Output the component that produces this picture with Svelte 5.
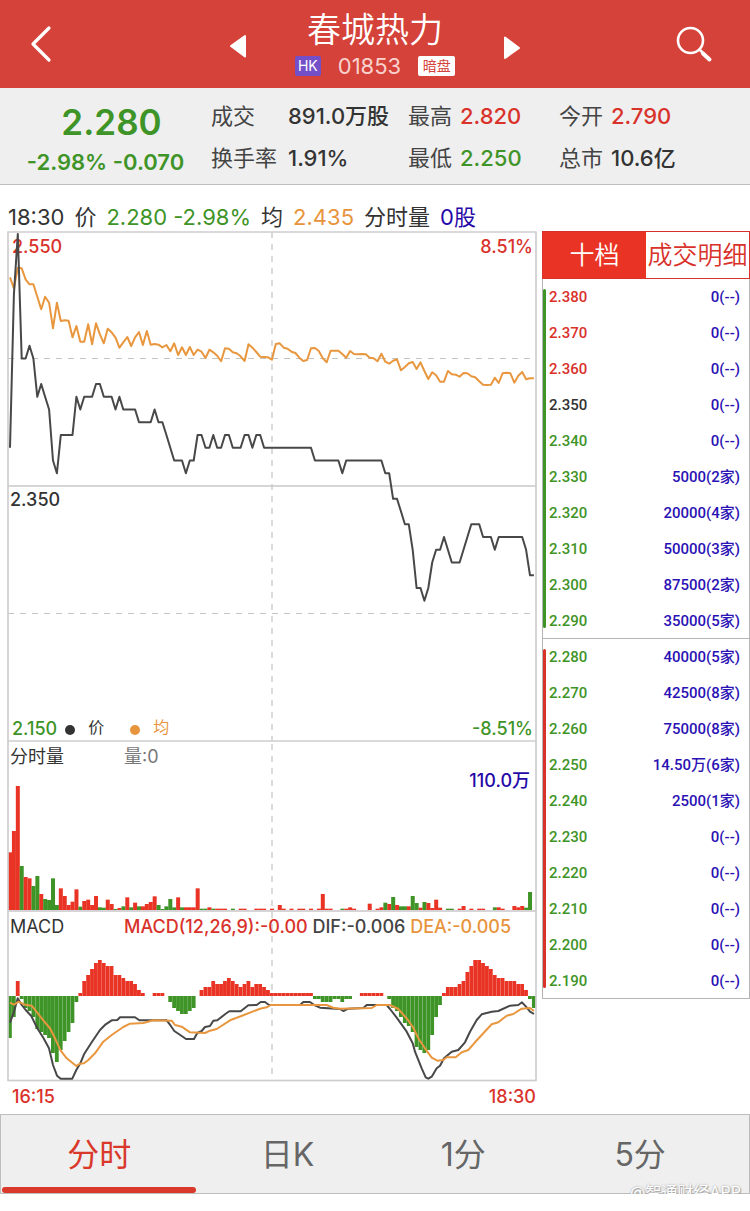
<script>
  const STEP = 3.91;
  const LEFT = 1;

  // Last traded price per minute, in ticks of 0.010 from the previous close of 2.350.
  const priceTicks = [
    3, 15, 20, 10, 10, 11, 10, 7, 8, 7, 6, 2, 1, 4, 4, 4, 4, 7, 6, 7, 7, 7, 8, 8, 7, 7, 7, 6, 7, 6,
    6, 6, 6, 5, 5, 5, 5, 6, 5, 5, 4, 3, 2, 2, 2, 1, 2, 2, 4, 4, 3, 3, 4, 3, 3, 4, 4, 3, 3, 3,
    4, 4, 3, 4, 4, 3, 3, 3, 3, 3, 3, 3, 3, 3, 3, 3, 3, 3, 2, 2, 2, 2, 2, 2, 2, 1, 2, 2, 2, 2,
    2, 2, 2, 2, 2, 2, 1, 1, -1, -1, -2, -3, -3, -5, -8, -8, -9, -8, -6, -5, -5, -4, -5, -6, -6, -6,
    -5, -4, -3, -3, -3, -4, -4, -4, -5, -4, -4, -4, -4, -4, -4, -4, -5, -7, -7
  ];

  // Average line per minute, in thirds of a chart unit.
  const average = [
    157, 190, 128, 130, 163, 178, 178, 215, 253, 215, 233, 310, 233, 288, 286, 287, 337, 303, 350, 350,
    298, 358, 295, 328, 355, 311, 322, 338, 368, 352, 336, 363, 337, 321, 360, 318, 359, 357, 359, 367,
    360, 379, 355, 390, 367, 390, 366, 390, 374, 380, 399, 374, 382, 392, 409, 370, 371, 382, 385, 394,
    408, 358, 368, 381, 395, 396, 397, 404, 357, 355, 368, 371, 380, 384, 398, 408, 405, 370, 369, 378,
    400, 412, 377, 377, 377, 387, 398, 378, 387, 388, 387, 388, 398, 400, 409, 386, 410, 416, 407, 403,
    436, 426, 415, 411, 432, 412, 438, 462, 442, 451, 470, 470, 438, 448, 449, 455, 444, 445, 454, 457,
    469, 479, 480, 479, 458, 474, 445, 443, 445, 473, 452, 441, 463, 460, 460
  ];

  // Volume per minute: positive is a rising minute, negative a falling one.
  const volume = [
    173, 237, 372, -132, 99, 95, -72, -102, 48, -33, -30, -95, -15, 65, 42, 15, 25, 62, -10, 27,
    31, 15, 42, -8, -7, 31, 18, -3, 6, -11, 38, -8, 22, -11, 11, 18, 24, 41, -15, -3,
    -11, -33, -8, 38, -8, 8, 8, 8, 65, -4, -4, 8, -4, 4, 4, 4, 0, -4, 0, 4,
    4, 0, 0, 4, 4, 4, 0, 4, 0, 15, 4, 0, 4, 0, 4, 4, 0, 4, 0, 4,
    48, 4, 4, 0, 0, -4, 4, 8, 4, 0, 0, 0, 19, 0, 4, 8, -22, 18, -39, 15,
    -11, -11, 11, -42, -21, 7, -24, 21, 6, 31, 7, 0, -4, -4, 0, 4, 12, 0, 4, 0,
    4, 4, 0, 0, -8, 8, 4, 0, 0, 12, 8, 12, -7, -54, 0
  ];

  // MACD histogram per minute.
  const macd = [
    -14, -7, 5, -1, -4, -5, -7, -11, -12, -13, -14, -19, -22, -18, -15, -12, -9, -2, 1, 5,
    7, 9, 11, 12, 11, 10, 10, 7, 7, 6, 5, 5, 4, 2, 1, 0, 0, 1, 1, 1,
    0, -2, -4, -5, -6, -6, -5, -4, 0, 2, 3, 3, 5, 4, 4, 5, 6, 5, 4, 3,
    4, 5, 3, 4, 4, 3, 2, 1, 1, 1, 1, 1, 1, 1, 1, 1, 1, 1, -1, -1,
    -2, -2, -2, -1, -1, -2, -1, -1, 0, 0, 1, 1, 1, 1, 1, 1, 0, -1, -4, -5,
    -7, -9, -10, -12, -17, -18, -19, -18, -13, -7, -3, 1, 3, 3, 3, 4, 5, 8, 10, 12,
    12, 11, 10, 9, 7, 6, 6, 5, 5, 5, 4, 4, 2, -1, -4
  ];

  const dif = [
    [30, 353], [42, 320], [53, 280], [65, 300], [77, 315], [94, 333], [112, 370], [130, 398], [147, 430],
    [159, 480], [171, 512], [182, 521], [217, 521], [229, 495], [241, 475], [252, 448], [275, 412],
    [300, 375], [317, 358], [335, 346], [352, 345], [360, 337], [405, 337], [418, 346], [500, 346],
    [512, 362], [523, 378], [545, 393], [558, 402], [582, 402], [592, 384], [605, 378], [615, 366],
    [630, 363], [640, 347], [652, 346], [675, 328], [688, 319], [722, 319], [745, 301], [770, 300],
    [782, 291], [795, 291], [807, 300], [900, 300], [910, 291], [930, 291], [943, 300], [960, 308],
    [1020, 312], [1030, 318], [1045, 311], [1090, 309], [1100, 300], [1160, 300], [1170, 312], [1190, 338],
    [1220, 380], [1238, 415], [1245, 440], [1265, 490], [1277, 517], [1285, 521], [1295, 515], [1310, 490],
    [1320, 482], [1332, 460], [1355, 440], [1375, 435], [1395, 412], [1410, 380], [1430, 345], [1445, 328],
    [1475, 320], [1495, 318], [1530, 302], [1555, 300], [1566, 292], [1578, 305], [1590, 320], [1602, 327]
  ];

  const dea = [
    [30, 293], [42, 299], [55, 290], [75, 299], [95, 302], [125, 340], [150, 370], [165, 400], [182, 437],
    [200, 460], [229, 483], [240, 476], [252, 475], [265, 465], [285, 445], [310, 410], [335, 390],
    [370, 366], [390, 356], [430, 354], [460, 346], [515, 347], [525, 360], [545, 365], [570, 382],
    [615, 384], [630, 377], [650, 372], [690, 346], [730, 331], [780, 311], [800, 307], [812, 300],
    [980, 300], [1000, 308], [1020, 311], [1115, 309], [1130, 300], [1170, 300], [1195, 312], [1220, 340],
    [1240, 368], [1255, 400], [1275, 430], [1295, 458], [1312, 467], [1330, 465], [1340, 457], [1367, 457],
    [1385, 442], [1405, 435], [1425, 412], [1450, 385], [1475, 358], [1495, 352], [1520, 332], [1540, 327],
    [1565, 311], [1590, 309], [1602, 318]
  ];

  const mid = (i) => LEFT + STEP * (i + 0.5);
  const join = (pts) => pts.map(([x, y]) => `${x.toFixed(1)},${y.toFixed(1)}`).join(' ');
  const priceLine = join(priceTicks.map((t, i) => [mid(i), Math.max(3, 255 - t * 12.75)]));
  const averageLine = join(average.map((v, i) => [mid(i), v / 3 - 6]));
  const toMacd = (pts) => join(pts.map(([x, y]) => [x / 3 - 7, y / 3 - 6]));

  const asks = [
    ['2.380', '0(--)', 'up'], ['2.370', '0(--)', 'up'], ['2.360', '0(--)', 'up'],
    ['2.350', '0(--)', 'flat'], ['2.340', '0(--)', 'down'], ['2.330', '5000(2家)', 'down'],
    ['2.320', '20000(4家)', 'down'], ['2.310', '50000(3家)', 'down'],
    ['2.300', '87500(2家)', 'down'], ['2.290', '35000(5家)', 'down']
  ];
  const bids = [
    ['2.280', '40000(5家)', 'down'], ['2.270', '42500(8家)', 'down'], ['2.260', '75000(8家)', 'down'],
    ['2.250', '14.50万(6家)', 'down'], ['2.240', '2500(1家)', 'down'], ['2.230', '0(--)', 'down'],
    ['2.220', '0(--)', 'down'], ['2.210', '0(--)', 'down'], ['2.200', '0(--)', 'down'],
    ['2.190', '0(--)', 'down']
  ];

  const stats = [
    ['成交', '891.0万股', 'flat'], ['最高', '2.820', 'up'], ['今开', '2.790', 'up'],
    ['换手率', '1.91%', 'flat'], ['最低', '2.250', 'down'], ['总市', '10.6亿', 'flat']
  ];

  const periods = ['分时', '日K', '1分', '5分'];
  let period = $state('分时');
  let side = $state('十档');
</script>

<header class="topbar">
  <button class="back" aria-label="返回">
    <svg width="22" height="38" viewBox="0 0 22 38"><path d="M19 3 3 19l16 16" fill="none" stroke="#fff" stroke-width="3.2" stroke-linecap="round" stroke-linejoin="round" /></svg>
  </button>
  <div class="switcher">
    <button aria-label="上一只">
      <svg width="18" height="28" viewBox="0 0 18 28"><path d="M16 5v20.500L2 15Z" fill="#fff" stroke="#fff" stroke-width="2" stroke-linejoin="round" /></svg>
    </button>
    <div class="title">
      <h1>春城热力</h1>
      <div class="code"><span class="tag hk">HK</span><span>01853</span><span class="tag dark">暗盘</span></div>
    </div>
    <button aria-label="下一只">
      <svg width="18" height="28" viewBox="0 0 18 28"><path d="M2 6.500v20.500L16 17Z" fill="#fff" stroke="#fff" stroke-width="2" stroke-linejoin="round" /></svg>
    </button>
  </div>
  <button class="search" aria-label="搜索">
    <svg width="38" height="38" viewBox="0 0 38 38"><circle cx="15.500" cy="15.500" r="12.500" fill="none" stroke="#fff" stroke-width="2.600" /><path d="m24.500 24.500 4 4" stroke="#fff" stroke-width="2.600" /><path d="m28 28.500 6.500 6" stroke="#fff" stroke-width="4" stroke-linecap="round" /></svg>
  </button>
</header>

<section class="summary">
  <div class="quote down">
    <strong>2.280</strong>
    <span>-2.98% -0.070</span>
  </div>
  <dl>
    {#each stats as [name, value, tone]}
      <dt>{name}</dt>
      <dd class={tone}>{value}</dd>
    {/each}
  </dl>
</section>

<main>
  <p class="ticker">
    <span>18:30</span><span>价</span><span class="down">2.280 -2.98%</span><span>均</span><span class="avg">2.435</span><span>分时量</span><span class="vol">0股</span>
  </p>

  <div class="board">
    <div class="charts">
      <div class="panel">
        <svg viewBox="0 0 530 510" role="img" aria-label="分时价格">
          <path class="dash" d="M265 1v509M1 127.500h528M1 382.500h528" />
          <path class="rule" d="M1 255h528" />
          <path class="frame" d="M1 510V1h528v509" />
          <text class="edge up" x="5" y="22">2.550</text>
          <polyline class="line orange" points={averageLine} />
          <polyline class="line ink" points={priceLine} />
        </svg>
        <span class="label figure tr up">8.51%</span>
        <span class="label figure middle">2.350</span>
        <div class="label legend">
          <span class="figure down">2.150</span><i></i><span class="name">价</span><i class="orange"></i><span class="name avg">均</span>
        </div>
        <span class="label figure br down">-8.51%</span>
      </div>

      <div class="panel">
        <svg viewBox="0 0 530 170" role="img" aria-label="分时量">
          <path class="dash" d="M265 3v166" />
          {#each volume as v, i}
            {#if v}
              <rect class={v > 0 ? 'rise' : 'fall'} x={LEFT + i * STEP} y={169 - Math.abs(v) / 3} width="4" height={Math.abs(v) / 3} />
            {/if}
          {/each}
          <path class="frame" d="M1 170V0M529 170V0M0 0h530" />
        </svg>
        <div class="label heads"><span>分时量</span><span class="muted">量:0</span></div>
        <span class="label figure peak vol">110.0万</span>
      </div>

      <div class="panel">
        <svg viewBox="0 0 530 170" role="img" aria-label="MACD">
          <path class="dash" d="M265 1v168" />
          {#each macd as v, i}
            {#if v}
              <rect class={v > 0 ? 'rise' : 'fall'} x={LEFT + i * STEP} y={v > 0 ? 85 - v * 3 : 85} width="3.800" height={Math.abs(v) * 3} />
            {/if}
          {/each}
          <rect class="frame" x="1" y="0" width="528" height="169.500" />
          <polyline class="line ink" points={toMacd(dif)} />
          <polyline class="line orange" points={toMacd(dea)} />
        </svg>
        <div class="label heads"><span>MACD</span><span class="figure up">MACD(12,26,9):-0.00 <b>DIF:-0.006</b> <b class="avg">DEA:-0.005</b></span></div>
      </div>

      <div class="times figure up"><span>16:15</span><span>18:30</span></div>
    </div>

    <aside>
      <div class="sides">
        {#each ['十档', '成交明细'] as name}
          <button class:active={side === name} onclick={() => (side = name)}>{name}</button>
        {/each}
      </div>
      {#each [asks, bids] as rows, n}
        <div class="book" class:bids={n === 1}>
          <table>
            <tbody>
              {#each rows as [price, size, tone]}
                <tr><th scope="row" class={tone}>{price}</th><td>{size}</td></tr>
              {/each}
            </tbody>
          </table>
        </div>
      {/each}
    </aside>
  </div>
</main>

<nav>
  {#each periods as name}
    <button class:active={period === name} onclick={() => (period = name)}>{name}</button>
  {/each}
  <span class="watermark">@智通财经APP</span>
</nav>

<style>
  :global(body) {
    margin: 0;
    background: #fff;
    color: #333;
    font-family: Inter, "Noto Sans CJK SC", sans-serif;
  }
  button {
    margin: 0;
    padding: 0;
    border: 0;
    background: none;
    color: inherit;
    font: inherit;
    cursor: pointer;
  }
  svg { display: block; }
  .up { color: #d9322b; fill: #d9322b; }
  .down { color: #3f9428; }
  .flat { color: #333; }
  .avg { color: #e8943c; }
  .vol { color: #2508a8; }

  .topbar {
    display: grid;
    grid-template-columns: 1fr 292px 1fr;
    align-items: center;
    height: 88px;
    background: #d5423a;
    color: #fff;
  }
  .back { justify-self: start; padding-left: 30px; }
  .search { justify-self: end; padding-right: 37px; }
  .switcher {
    display: flex;
    justify-content: space-between;
    align-items: center;
    padding-top: 2px;
  }
  .title {
    display: flex;
    flex-direction: column;
    align-items: center;
    gap: 6px;
  }
  h1 {
    margin: 0;
    font-size: 34px;
    font-weight: 350;
    line-height: 36px;
  }
  .code {
    display: flex;
    align-items: center;
    gap: 17px;
    color: #f9d2ce;
    font-size: 22px;
    line-height: 24px;
  }
  .tag {
    border-radius: 2px;
    font-size: 14px;
    line-height: 20px;
    text-align: center;
  }
  .hk { width: 26px; background: #7350c8; color: #fff; }
  .dark { width: 37px; background: #fff; color: #d5423a; }

  .summary {
    display: grid;
    grid-template-columns: 211px 1fr;
    height: 96px;
    border-bottom: 1px solid #bfbfbf;
    background: #efefef;
  }
  .quote {
    display: flex;
    flex-direction: column;
    align-items: center;
    padding-top: 14px;
    font-weight: 600;
  }
  .quote strong { padding-left: 12px; font-size: 35px; font-weight: 600; line-height: 40px; }
  .quote span { font-size: 22px; line-height: 40px; }
  dl {
    display: grid;
    grid-template-columns: 77px 120px 52px 99px 52px 1fr;
    grid-auto-rows: 42px;
    align-content: start;
    margin: 0;
    padding-top: 7px;
    font-size: 22px;
    line-height: 42px;
    white-space: nowrap;
  }
  dt { color: #444; }
  dd { margin: 0; font-weight: 500; }

  .ticker {
    display: flex;
    gap: 10px;
    margin: 0;
    padding: 18px 0 0 8px;
    font-size: 22px;
    line-height: 28px;
    white-space: nowrap;
  }
  .board {
    display: grid;
    grid-template-columns: minmax(0, 1fr) 208px;
    gap: 5px;
    align-items: start;
    padding-left: 7px;
  }
  .panel { position: relative; }
  .panel svg { width: 100%; height: auto; overflow: visible; }
  .frame { fill: none; stroke: #cfcdcf; stroke-width: 1.7; }
  .rule { stroke: #c8c8c8; stroke-width: 1.5; }
  .dash { fill: none; stroke: #c4c4c4; stroke-width: 1.2; stroke-dasharray: 6 6; }
  .line { fill: none; stroke-width: 2; stroke-linejoin: round; }
  .ink { stroke: #484848; }
  polyline.orange { stroke: #e8973f; }
  .rise { fill: #e93425; }
  .fall { fill: #3f9428; }
  .edge, .figure {
    font-size: 18px;
    font-weight: 500;
  }
  .label {
    position: absolute;
    font-size: 18px;
    line-height: 24px;
    white-space: nowrap;
  }
  .tr { top: 4px; right: 4px; }
  .br { bottom: 0; right: 4px; }
  .middle { top: 50%; left: 3px; margin-top: 2px; }
  .legend {
    bottom: 0;
    left: 5px;
    display: flex;
    align-items: center;
  }
  .legend i {
    width: 10px;
    height: 10px;
    margin: 2px 13px 0 8px;
    border-radius: 50%;
    background: #333;
  }
  .legend i.orange { margin-left: 26px; background: #e8943c; }
  .legend .name { font-size: 16px; line-height: 20px; padding-bottom: 4px; }
  .heads {
    top: 4px;
    left: 3px;
    display: grid;
    grid-template-columns: 114px auto;
  }
  .heads b { color: #444; font-weight: inherit; }
  .heads b.avg { color: #e8943c; }
  .muted { color: #777; }
  .peak { top: 28px; right: 7px; }
  .times {
    display: flex;
    justify-content: space-between;
    padding: 4px 1px 0 5px;
    line-height: 24px;
  }

  .sides {
    display: grid;
    grid-template-columns: 103px 1fr;
    height: 48px;
    box-sizing: border-box;
    border: 1px solid #d9322b;
    color: #d9322b;
    font-size: 25px;
    font-weight: 350;
    line-height: 36px;
    white-space: nowrap;
  }
  .sides .active { background: #e93425; color: #fff; }
  .book {
    position: relative;
    box-sizing: border-box;
    height: 360px;
    border: 1px solid #b5b5b5;
    border-top: 0;
  }
  .book::before {
    content: "";
    position: absolute;
    top: 10px;
    bottom: 10px;
    left: 0;
    width: 3px;
    border-radius: 2px;
    background: #3f9428;
  }
  .bids::before { background: #d9322b; }
  table {
    width: 100%;
    border-collapse: collapse;
    font-family: Roboto, "Noto Sans CJK SC", sans-serif;
    font-size: 15px;
  }
  th, td {
    height: 36px;
    box-sizing: border-box;
    padding: 0 9px 1px 6px;
    font-weight: 500;
    line-height: 20px;
  }
  th { text-align: left; }
  td { color: #2a12b4; text-align: right; }

  nav {
    position: relative;
    display: grid;
    grid-template-columns: 197fr 180fr 172fr 182fr;
    box-sizing: border-box;
    height: 80px;
    margin-top: 5px;
    padding-right: 18px;
    border: 1px solid #bdbdbd;
    background: #efefef;
    color: #666;
    font-size: 32px;
  }
  nav button { position: relative; padding: 0 0 5px; }
  nav .active { color: #d9382b; }
  nav .active::after {
    content: "";
    position: absolute;
    right: 2px;
    bottom: 0;
    left: 1px;
    height: 6px;
    border-radius: 3px;
    background: #d9382b;
  }
  .watermark {
    position: absolute;
    right: 8px;
    bottom: -10px;
    color: #fff;
    font-size: 16px;
    line-height: 22px;
    text-shadow: 0 0 2px #999, 1px 1px 1px #aaa;
  }
</style>
